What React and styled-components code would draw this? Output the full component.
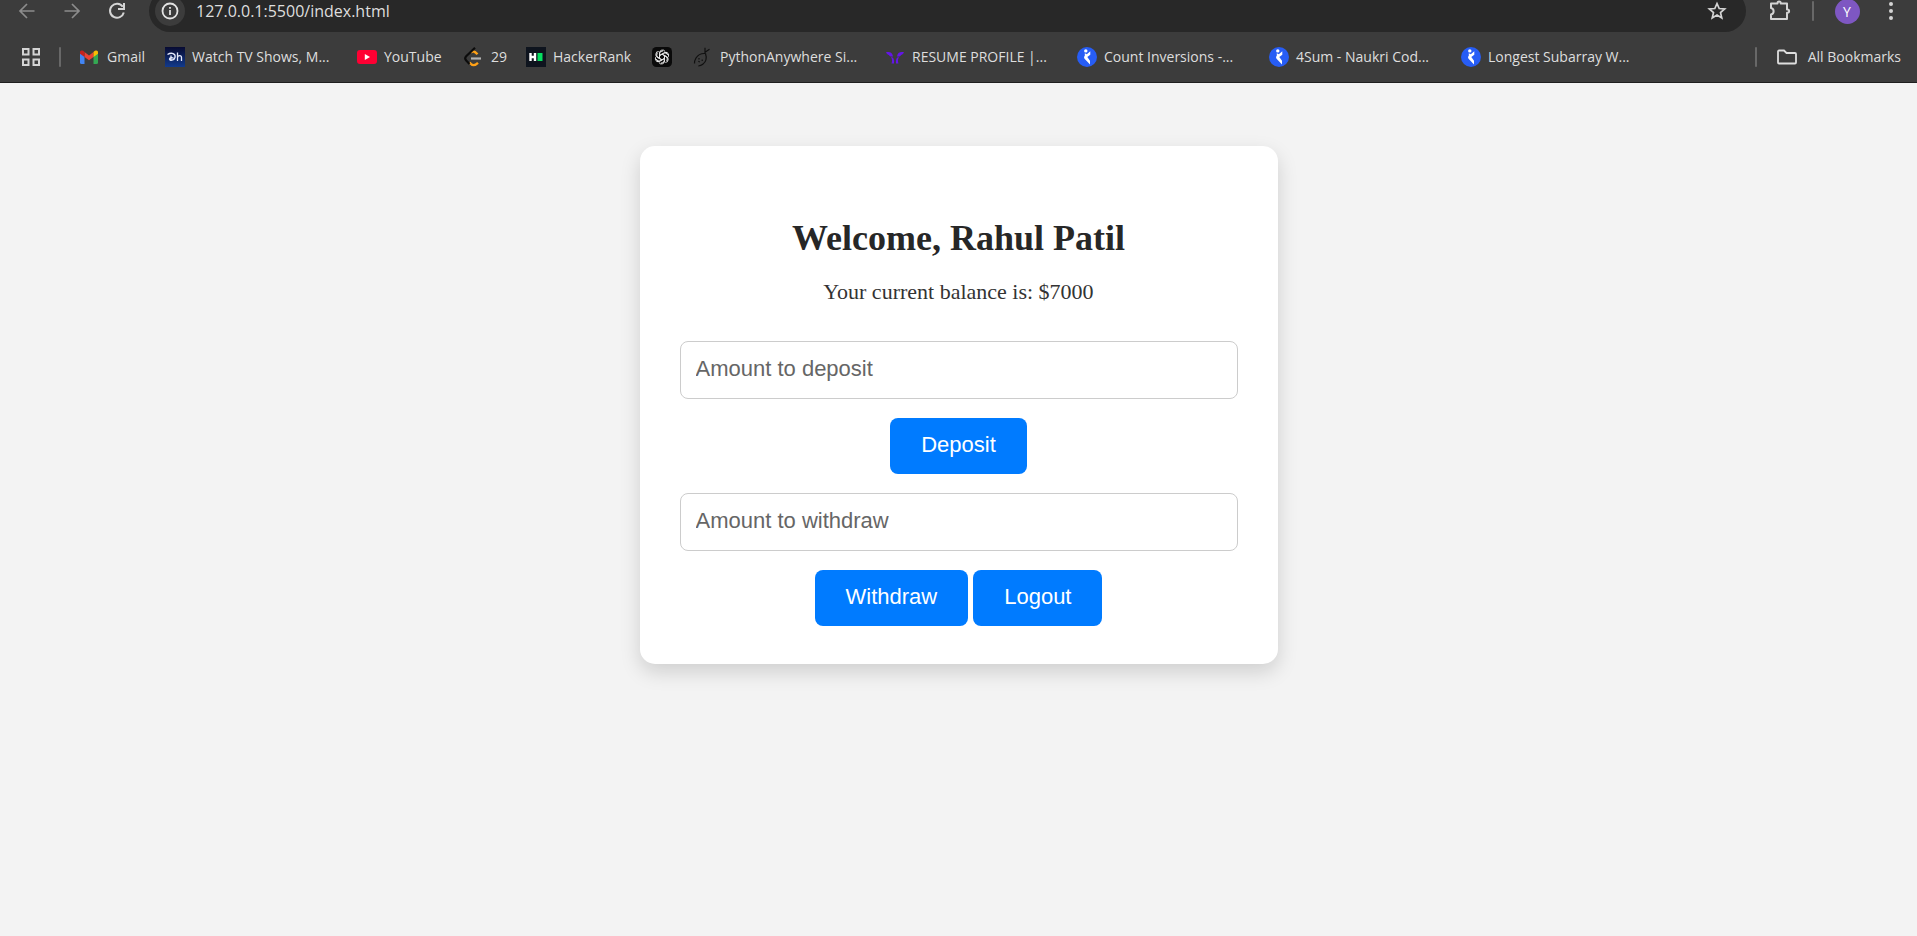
import React from "react";
import styled, { createGlobalStyle } from "styled-components";

const GlobalStyle = createGlobalStyle`
  * { box-sizing: border-box; }
  body {
    margin: 0;
    background: #f3f3f3;
    color: #333;
    font-family: Georgia, "Liberation Serif", serif;
  }
`;

const uiFont = `"Segoe UI", "Open Sans", sans-serif`;

const Chrome = styled.header`
  background: #3c3c3c;
  color: #dedede;
  border-bottom: 1px solid #1f1f1f;
  font-family: ${uiFont};
`;

const Toolbar = styled.div`
  height: 32px;
  overflow: hidden;
  display: flex;
  align-items: flex-end;
  padding: 0 15px 0 12px;
`;

const NavButtons = styled.nav`
  display: flex;
  gap: 15px;
  margin-right: 17px;
`;

const IconButton = styled.button`
  flex: none;
  width: ${(p) => p.$width || 30}px;
  height: 42px;
  padding: 0;
  border: 0;
  background: none;
  color: ${(p) => (p.$dim ? "#8c8c8c" : "#d4d4d4")};
  display: flex;
  align-items: center;
  justify-content: center;
`;

const AddressBar = styled.div`
  flex: 1;
  height: 42px;
  border-radius: 21px;
  background: #282828;
  display: flex;
  align-items: center;
  padding: 0 14px 0 6px;
`;

const SiteInfo = styled.button`
  width: 30px;
  height: 30px;
  padding: 0;
  border: 0;
  border-radius: 50%;
  background: #3c3c3c;
  color: #e3e3e3;
  display: flex;
  align-items: center;
  justify-content: center;
`;

const Url = styled.input`
  flex: 1;
  min-width: 0;
  height: 28px;
  margin-left: 11px;
  padding: 0;
  border: 0;
  outline: 0;
  background: none;
  color: #dedede;
  font: 16px ${uiFont};
`;

const Tools = styled.div`
  display: flex;
  align-items: center;
  gap: 17px;
  margin-left: 19px;
`;

const Divider = styled.span`
  flex: none;
  width: 2px;
  height: 20px;
  border-radius: 1px;
  background: #686868;
`;

const Avatar = styled.span`
  width: 25px;
  height: 25px;
  border-radius: 50%;
  background: #7e57c2;
  color: #fff;
  display: grid;
  place-items: center;
  font: 14px/25px ${uiFont};
`;

const BookmarkBar = styled.nav`
  height: 50px;
  display: flex;
  align-items: center;
  padding: 0 16px 0 15px;
  font-size: 14px;
`;

const BookmarkList = styled.ul`
  flex: 1;
  min-width: 0;
  display: flex;
  gap: 21px;
  list-style: none;
  margin: 0 0 0 7px;
  padding: 0;
`;

const BookmarkItem = styled.li`
  flex: none;
  width: ${(p) => p.$width}px;
`;

const BookmarkLink = styled.a`
  display: flex;
  align-items: center;
  gap: 7px;
  color: inherit;
  text-decoration: none;
  white-space: nowrap;
  line-height: 20px;
  svg { flex: none; }
`;

const FolderLink = styled(BookmarkLink)`
  gap: 11px;
`;

const AllBookmarks = styled.div`
  display: flex;
  align-items: center;
  gap: 20px;
`;

const Page = styled.main`
  padding: 63px 16px;
`;

const Card = styled.section`
  max-width: 638px;
  margin: 0 auto;
  padding: 72px 40px 38px;
  border-radius: 15px;
  background: #fff;
  box-shadow: 0 8px 20px rgba(0, 0, 0, 0.15);
  text-align: center;
`;

const Title = styled.h2`
  margin: 0 0 18px;
  color: #272727;
  font-size: 36px;
  line-height: 40px;
`;

const Balance = styled.p`
  margin: 0 0 33px;
  font-size: 22px;
  line-height: 32px;
`;

const Form = styled.form`
  display: flex;
  flex-direction: column;
  align-items: center;
  gap: 19px;
  & + & { margin-top: 19px; }
`;

const AmountInput = styled.input`
  width: 100%;
  height: 58px;
  padding: 0 15px 2px;
  border: 1px solid #ccc;
  border-radius: 8px;
  background: #fff;
  font: 22px "Liberation Sans", Arial, sans-serif;
  &::placeholder { color: #666; opacity: 1; }
`;

const Actions = styled.div`
  display: flex;
  gap: 5px;
`;

const ActionButton = styled.button`
  height: 56px;
  padding: 0 31px 2px;
  border: 0;
  border-radius: 8px;
  background: #007bff;
  color: #fff;
  font: 22px "Liberation Sans", Arial, sans-serif;
`;

const Icon = ({ size = 20, box = 20, children, ...rest }) => (
  <svg width={size} height={size} viewBox={`0 0 ${box} ${box}`} fill="none" aria-hidden="true" {...rest}>
    {children}
  </svg>
);

const line = { stroke: "currentColor", strokeWidth: 2 };

const BackIcon = () => (
  <Icon><path d="M17.500 10H3M10 3L3 10l7 7" {...line} strokeWidth="1.700" /></Icon>
);
const ForwardIcon = () => (
  <Icon><path d="M2.500 10H17M10 3l7 7-7 7" {...line} strokeWidth="1.700" /></Icon>
);
const ReloadIcon = () => (
  <Icon>
    <path d="M15.800 5.800A7 7 0 1 0 16.800 11.500" {...line} />
    <path d="M17 2v6h-6" {...line} />
  </Icon>
);
const InfoIcon = () => (
  <Icon>
    <circle cx="10" cy="10" r="7.500" {...line} strokeWidth="1.800" />
    <path d="M10 9v5M10 6v1.800" {...line} strokeWidth="1.800" />
  </Icon>
);
const StarIcon = () => (
  <Icon>
    <path d="M10 2.500l2.200 5 5.500.5-4.200 3.600 1.300 5.400L10 14.100 5.200 17l1.300-5.400L2.300 8l5.500-.5z" {...line} strokeWidth="1.700" />
  </Icon>
);
const PuzzleIcon = () => (
  <Icon size={22} box={22}>
    <path d="M2 3.500h6.500V3a1.600 1.600 0 0 1 3.200 0v.500H18V9.500h.500a1.600 1.600 0 0 1 0 3.200H18V19H2v-4.500c3.500-.8 3.500-5.700 0-6.500z" {...line} strokeLinejoin="round" />
  </Icon>
);
const MenuIcon = () => (
  <Icon><g fill="currentColor"><circle cx="10" cy="3" r="2" /><circle cx="10" cy="10" r="2" /><circle cx="10" cy="17" r="2" /></g></Icon>
);
const AppsIcon = () => (
  <Icon>
    <path d="M2 2h5.500v5.500H2zM12.500 2H18v5.500h-5.500zM2 12.500h5.500V18H2zM12.500 12.500H18V18h-5.500z" {...line} />
  </Icon>
);
const FolderIcon = () => (
  <Icon>
    <path d="M1 4.500a1 1 0 0 1 1-1h5l2.500 2.500H18a1 1 0 0 1 1 1v8.500a1 1 0 0 1-1 1H2a1 1 0 0 1-1-1z" {...line} strokeWidth="1.800" />
  </Icon>
);

const GmailIcon = () => (
  <Icon>
    <path d="M0 5.500l4.500 3.300V17H1.500A1.500 1.500 0 0 1 0 15.500z" fill="#4285f4" />
    <path d="M18 5.500l-4.500 3.300V17h3a1.500 1.500 0 0 0 1.500-1.500z" fill="#34a853" />
    <path d="M4.500 5L9 8.400 13.500 5v5L9 13.300 4.500 10z" fill="#ea4335" />
    <path d="M0 5.500C0 3.200 2.300 2.800 4.500 5v5L0 6.800z" fill="#c5221f" />
    <path d="M18 5.500c0-2.300-2.300-2.700-4.500-.5v5L18 6.800z" fill="#fbbc04" />
  </Icon>
);
const HotstarIcon = () => (
  <Icon>
    <defs>
      <linearGradient id="hotstar" x1="0" y1="0" x2="0" y2="1">
        <stop offset="0" stopColor="#080b32" /><stop offset="1" stopColor="#123a8c" />
      </linearGradient>
    </defs>
    <path d="M0 0h20v20H0z" fill="url(#hotstar)" />
    <path d="M2.500 7.500c4-2.500 8.500-1 7.500 3-.8 3.200-5.500 3.500-5.500 1.500 0-1.300 2.500-1.800 4-.8M6 8.500V14M12.500 5.500V14m0-3.500c.5-2.500 4-2.500 4 0V14" stroke="#e5eafb" strokeWidth="1.300" />
  </Icon>
);
const YouTubeIcon = () => (
  <Icon><rect y="3" width="20" height="14" rx="3" fill="#ff0033" /><path d="M7.800 7v6l5.200-3z" fill="#fff" /></Icon>
);
const LeetCodeIcon = () => (
  <Icon>
    <path d="M7 5.500c2-1.800 3.500-1.500 6.500 1.800M5.500 15.500c3 3.500 5 3.500 8.500.3" stroke="#ffa116" strokeWidth="2.400" />
    <path d="M11 .8L2.200 9.200c-1.400 1.500-1.400 2.800 0 4.300L5.500 17" stroke="#0c0c0c" strokeWidth="2.200" />
    <path d="M7 11.500h10" stroke="#b3b3b3" strokeWidth="2.200" />
  </Icon>
);
const HackerRankIcon = () => (
  <Icon>
    <path d="M0 0h20v20H0z" fill="#0e141e" />
    <path d="M4.500 6v8M9 6v8M4.500 10H9" stroke="#fff" strokeWidth="2.400" />
    <path d="M11.500 6h5v8h-5z" fill="#05e060" />
  </Icon>
);
const OpenAIIcon = () => (
  <Icon>
    <rect width="20" height="20" rx="4.500" fill="#0a0a0a" />
    <g stroke="#e6e6e6" strokeWidth="1">
      {[0, 60, 120, 180, 240, 300].map((a) => (
        <path key={a} transform={`rotate(${a} 10 10)`} d="M7.500 11.300V6.200a3 3 0 0 1 5.500-1.800M7.500 8.600l3.900-2.200a3 3 0 0 1 4.300 1.600" />
      ))}
    </g>
  </Icon>
);
const PythonAnywhereIcon = () => (
  <Icon>
    <path d="M12 .8v6M16.500 2.300l-4.500 3M12 6.500c-3.500-.2-7 1.200-9 4.500-1.300 2.200-1.700 3.800-1.500 5.500M12.500 6.500c1.300 4 .3 8.500-2.700 10.800-1.500 1.200-3.200 1.600-4.500 1.700" stroke="#101010" strokeWidth="1.200" />
    <path d="M6 11v1.500M9.200 12.500V14M5.300 14.300l1.500.7" stroke="#101010" strokeWidth="1.200" />
  </Icon>
);
const ResumeIcon = () => (
  <Icon>
    <path d="M1 5.200c4-.8 6.500.5 7 4.300-2.500.3-3.500-.3-4-1.500C2.800 7.700 1.500 6.700 1 5.200zM19 5.200c-4-.8-6.500.5-7 4.300 2.500.3 3.500-.3 4-1.500 1.200-.3 2.500-1.300 3-2.800zM6 10c2.500.2 3.500 2.500 3 6.500H6.500C7.500 14 7 12 6 10zM14 10c-2.500.2-3.500 2.500-3 6.500h2.500c-1-2.500-.5-4.500.5-6.500z" fill="#6415e8" />
  </Icon>
);
const NaukriIcon = () => (
  <Icon>
    <circle cx="10" cy="10" r="10" fill="#275df5" />
    <circle cx="8.800" cy="3.900" r="1.700" fill="#fff" />
    <path d="M13.300 4.300v3.500L10.300 10 13 13.800v3.700L7.800 12c-1-1.200-1-2.300 0-3.300V6.300l2 1z" fill="#fff" />
  </Icon>
);

const bookmarks = [
  { label: "Gmail", icon: GmailIcon, width: 64 },
  { label: "Watch TV Shows, M...", icon: HotstarIcon, width: 171 },
  { label: "YouTube", icon: YouTubeIcon, width: 86 },
  { label: "29", icon: LeetCodeIcon, width: 41 },
  { label: "HackerRank", icon: HackerRankIcon, width: 105 },
  { label: "", name: "ChatGPT", icon: OpenAIIcon, width: 20 },
  { label: "PythonAnywhere Si...", icon: PythonAnywhereIcon, width: 171 },
  { label: "RESUME PROFILE |...", icon: ResumeIcon, width: 171 },
  { label: "Count Inversions -...", icon: NaukriIcon, width: 171 },
  { label: "4Sum - Naukri Cod...", icon: NaukriIcon, width: 171 },
  { label: "Longest Subarray W...", icon: NaukriIcon, width: 171 },
];

function BrowserChrome() {
  return (
    <Chrome>
      <Toolbar>
        <NavButtons>
          <IconButton $dim aria-label="Back"><BackIcon /></IconButton>
          <IconButton $dim aria-label="Forward"><ForwardIcon /></IconButton>
          <IconButton aria-label="Reload"><ReloadIcon /></IconButton>
        </NavButtons>
        <AddressBar>
          <SiteInfo aria-label="Site information"><InfoIcon /></SiteInfo>
          <Url aria-label="Address" defaultValue="127.0.0.1:5500/index.html" />
          <IconButton aria-label="Bookmark this page"><StarIcon /></IconButton>
        </AddressBar>
        <Tools>
          <IconButton aria-label="Extensions"><PuzzleIcon /></IconButton>
          <Divider />
          <IconButton $width={32} aria-label="Profile"><Avatar>Y</Avatar></IconButton>
          <IconButton $width={22} aria-label="Menu"><MenuIcon /></IconButton>
        </Tools>
      </Toolbar>
      <BookmarkBar aria-label="Bookmarks">
        <IconButton $width={32} aria-label="Apps"><AppsIcon /></IconButton>
        <IconButton as="span" $width={26}><Divider /></IconButton>
        <BookmarkList>
          {bookmarks.map(({ label, name, icon: Glyph, width }) => (
            <BookmarkItem key={label || name} $width={width}>
              <BookmarkLink href="#" aria-label={name}>
                <Glyph />
                {label && <span>{label}</span>}
              </BookmarkLink>
            </BookmarkItem>
          ))}
        </BookmarkList>
        <AllBookmarks>
          <Divider />
          <FolderLink href="#"><FolderIcon /><span>All Bookmarks</span></FolderLink>
        </AllBookmarks>
      </BookmarkBar>
    </Chrome>
  );
}

export default function App() {
  const stay = (e) => e.preventDefault();
  return (
    <>
      <GlobalStyle />
      <BrowserChrome />
      <Page>
        <Card>
          <Title>Welcome, Rahul Patil</Title>
          <Balance>Your current balance is: $7000</Balance>
          <Form onSubmit={stay}>
            <AmountInput aria-label="Amount to deposit" placeholder="Amount to deposit" inputMode="decimal" />
            <ActionButton type="submit">Deposit</ActionButton>
          </Form>
          <Form onSubmit={stay}>
            <AmountInput aria-label="Amount to withdraw" placeholder="Amount to withdraw" inputMode="decimal" />
            <Actions>
              <ActionButton type="submit">Withdraw</ActionButton>
              <ActionButton type="button">Logout</ActionButton>
            </Actions>
          </Form>
        </Card>
      </Page>
    </>
  );
}
